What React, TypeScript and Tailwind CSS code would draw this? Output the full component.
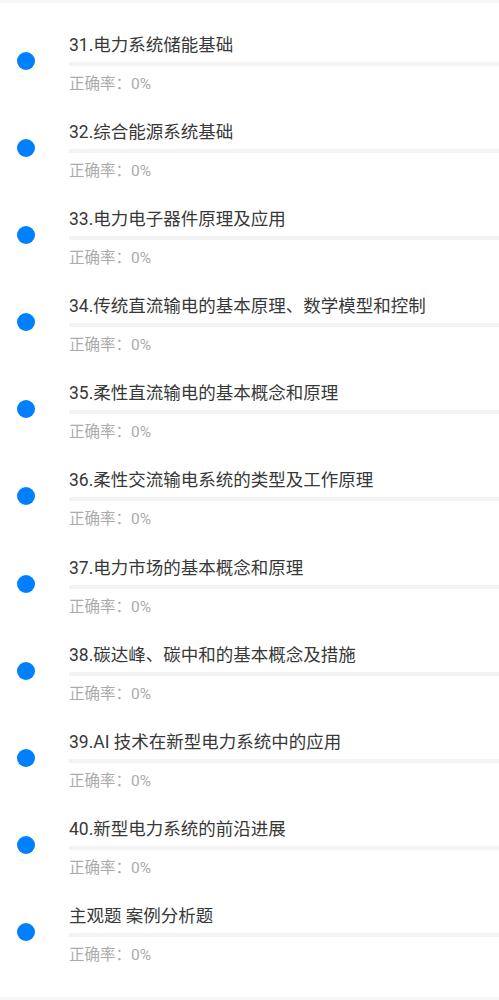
import React from "react";

const items = [
  "31.电力系统储能基础",
  "32.综合能源系统基础",
  "33.电力电子器件原理及应用",
  "34.传统直流输电的基本原理、数学模型和控制",
  "35.柔性直流输电的基本概念和原理",
  "36.柔性交流输电系统的类型及工作原理",
  "37.电力市场的基本概念和原理",
  "38.碳达峰、碳中和的基本概念及措施",
  "39.AI 技术在新型电力系统中的应用",
  "40.新型电力系统的前沿进展",
  "主观题 案例分析题",
];

export default function App() {
  return (
    <div
      className="w-[499px] h-[1000px] bg-white flex flex-col overflow-hidden"
      style={{ fontFamily: 'Roboto, "Noto Sans CJK SC", sans-serif' }}
    >
      <div className="h-[3px] bg-[#f6f6f6] shrink-0" />
      <div className="flex flex-col">
        {items.map((t) => (
          <div key={t} className="flex h-[87.1px] shrink-0">
            <div className="w-[69px] shrink-0">
              <div className="ml-[17px] mt-[49px] w-[18px] h-[18px] rounded-full bg-[#0080ff]" />
            </div>
            <div className="flex-1 pt-[31px]">
              <div className="text-[17.5px] leading-[22px] text-[#383838]">{t}</div>
              <div className="mt-[6px] h-[4px] bg-[#f3f3f3]" />
              <div className="mt-[8px] text-[15.5px] leading-[20px] text-[#ababab]">正确率：0%</div>
            </div>
          </div>
        ))}
      </div>
      <div className="flex-1" />
      <div className="h-[3px] bg-[#f6f6f6] shrink-0" />
    </div>
  );
}
